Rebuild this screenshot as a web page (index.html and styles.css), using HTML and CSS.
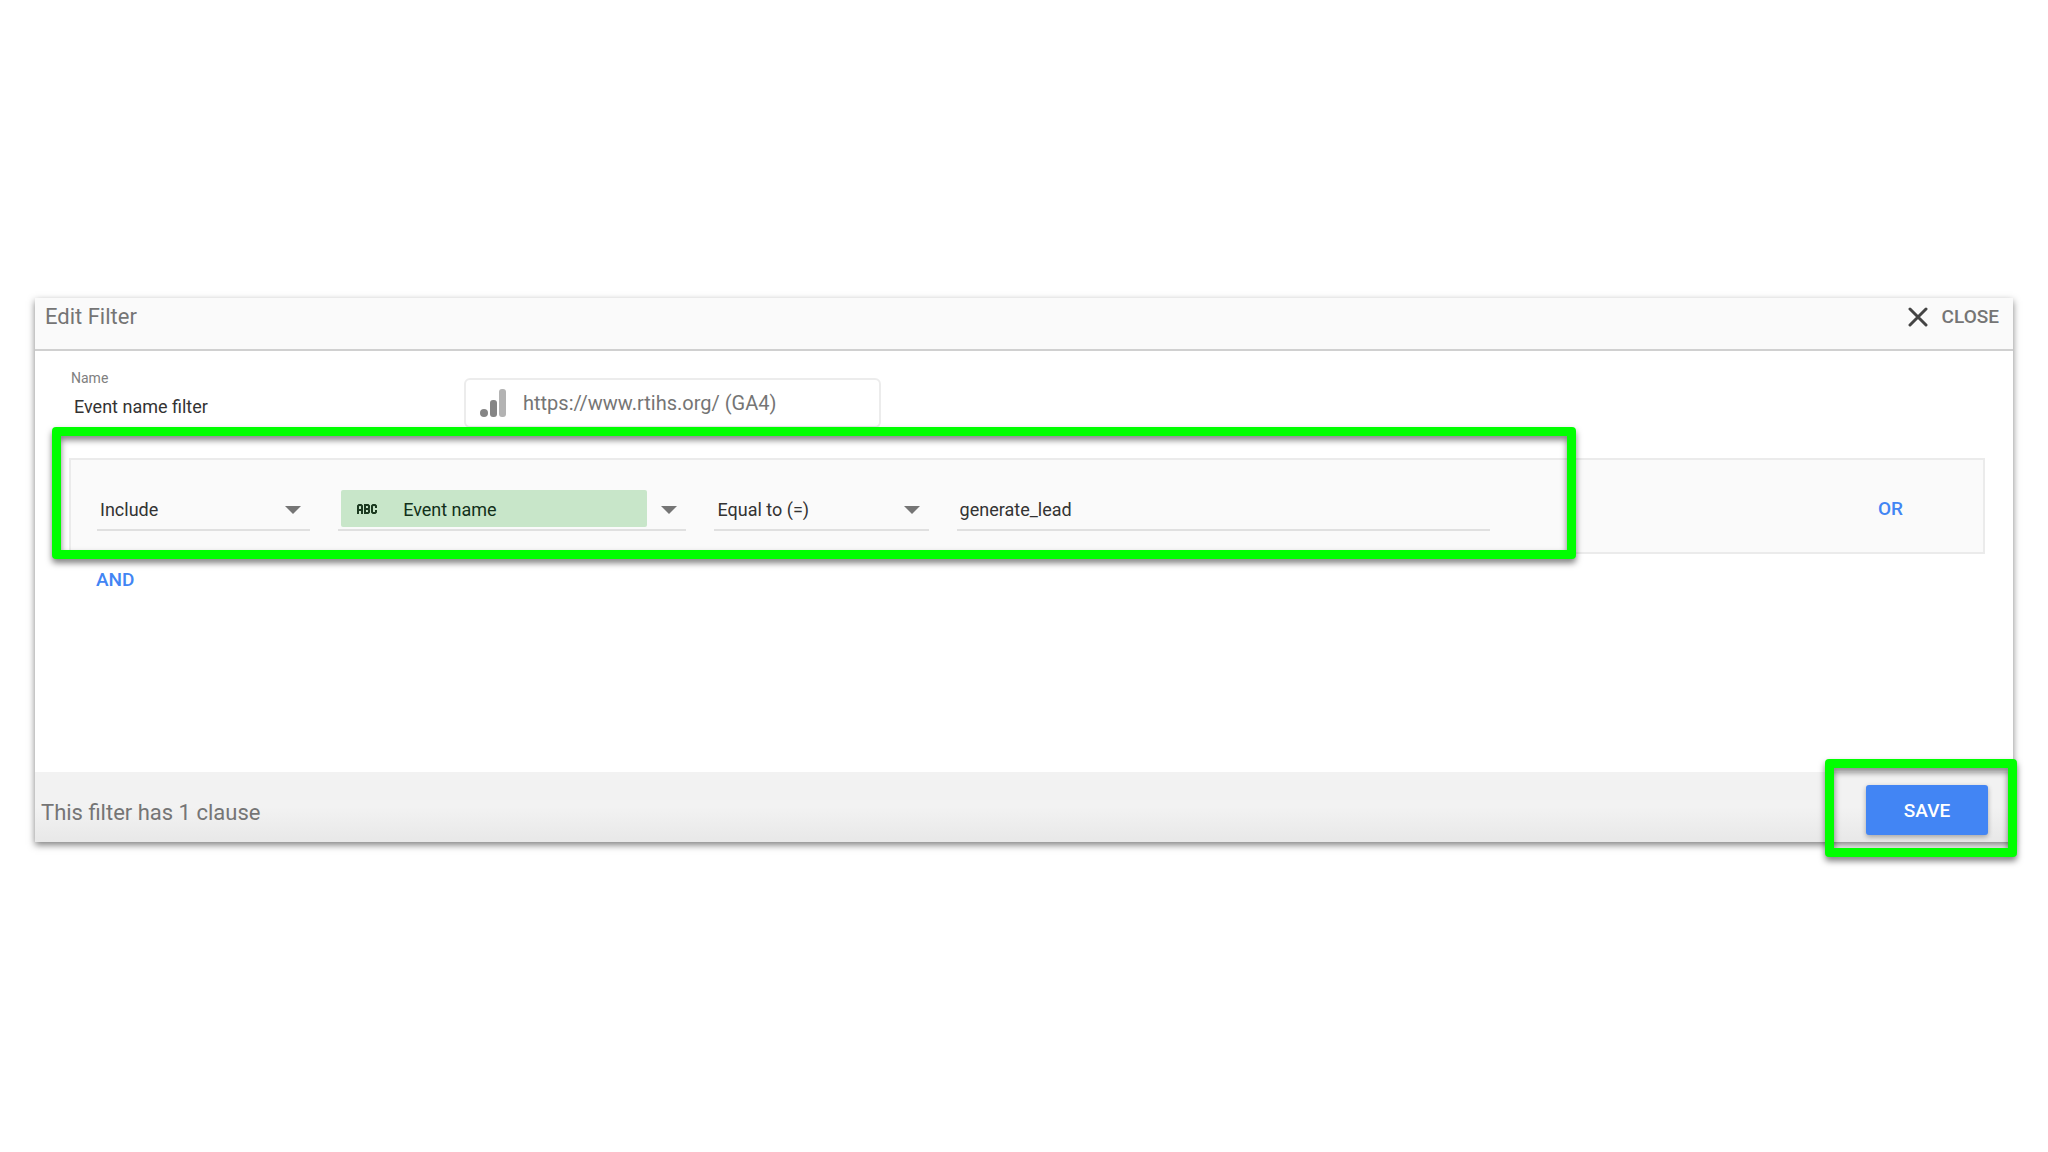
FILE: index.html
```html
<!DOCTYPE html>
<html lang="en">
<head>
    <meta charset="UTF-8">
    <meta name="viewport" content="width=device-width, initial-scale=1.0">
    <title>Edit Filter</title>
    <link rel="stylesheet" href="styles.css">
</head>
<body>

<main class="dialog">
    <!-- Header -->
    <header class="dialog-header">
        <h1>Edit Filter</h1>
        <button type="button" class="close-button">
            <svg width="20" height="20" viewBox="0 0 20 20" aria-hidden="true">
                <path d="M2 2L18 18M18 2L2 18" fill="none" stroke="#444" stroke-width="3" stroke-linecap="round"/>
            </svg>
            CLOSE
        </button>
    </header>

    <section class="dialog-body">
        <!-- Filter name and data source -->
        <div class="top-row">
            <div class="name-field">
                <label for="filter-name">Name</label>
                <input type="text" id="filter-name" value="Event name filter">
            </div>
            <div class="source">
                <svg width="28" height="30" viewBox="0 0 28 30" aria-hidden="true">
                    <circle cx="4" cy="25" r="4" fill="#858585"/>
                    <rect x="10" y="12" width="7" height="17" rx="3" fill="#858585"/>
                    <rect x="19" y="1" width="7" height="28" rx="3" fill="#b3b3b3"/>
                </svg>
                <span>https://www.rtihs.org/ (GA4)</span>
            </div>
        </div>

        <!-- Clause -->
        <div class="clause">
            <div class="clause-fields">
                <div class="field">
                    <select aria-label="Include or exclude">
                        <option>Include</option>
                        <option>Exclude</option>
                    </select>
                </div>
                <div class="field">
                    <button type="button" class="dimension">
                        <span class="chip">
                            <svg width="22" height="12" viewBox="0 0 22 12" aria-hidden="true">
                                <g fill="none" stroke="#1c3a20" stroke-width="2">
                                    <path d="M2 11V3L3 2H5L6 3V11M2 7H6"/>
                                    <path d="M9 2V10M8 2H12L13 3V5L12 6H9M12 6L13 7V9L12 10H8"/>
                                    <path d="M20 5V3L19 2H17L16 3V9L17 10H19L20 9V7"/>
                                </g>
                            </svg>
                            Event name
                        </span>
                    </button>
                </div>
                <div class="field">
                    <select aria-label="Condition">
                        <option>Equal to (=)</option>
                        <option>Contains</option>
                    </select>
                </div>
                <div class="field field-value">
                    <input type="text" aria-label="Value" value="generate_lead">
                </div>
                <div class="highlight highlight-clause"></div>
            </div>
            <div class="clause-or">
                <button type="button" class="text-button">OR</button>
            </div>
        </div>

        <button type="button" class="text-button and-button">AND</button>
    </section>

    <!-- Footer -->
    <footer class="dialog-footer">
        <p>This filter has 1 clause</p>
        <div class="save">
            <button type="button" class="save-button">SAVE</button>
            <div class="highlight highlight-save"></div>
        </div>
    </footer>
</main>

</body>
</html>
```

FILE: styles.css
```css
* {
    box-sizing: border-box;
}

body {
    min-height: 100vh;
    margin: 0;
    padding: 298px 35px 0;
    background-color: #fff;
    font-family: Roboto, 'Liberation Sans', sans-serif;
    font-size: 18px;
    color: #333;
}

button,
input,
select {
    margin: 0;
    padding: 0;
    border: none;
    background: none;
    color: inherit;
    font: inherit;
}

button {
    cursor: pointer;
}

/* Dialog */
.dialog {
    background-color: #fff;
    box-shadow: 0 3px 7px rgba(0, 0, 0, 0.5);
}

.dialog-header {
    display: flex;
    justify-content: space-between;
    align-items: flex-start;
    height: 53px;
    padding: 5px 14px 0 10px;
    background-color: #fafafa;
    border-bottom: 2px solid #d0d0d0;
}

.dialog-header h1 {
    margin: 0;
    font-size: 22px;
    font-weight: 400;
    line-height: 28px;
    color: #757575;
}

.close-button {
    display: flex;
    align-items: center;
    gap: 14px;
    font-size: 19px;
    font-weight: 500;
    line-height: 28px;
    color: #757575;
}

.dialog-body {
    height: 421px;
    padding: 19px 28px 0 34px;
}

/* Name and data source */
.top-row {
    display: flex;
    align-items: flex-start;
    height: 88px;
}

.name-field {
    display: flex;
    flex-direction: column;
    width: 395px;
    padding-left: 2px;
}

.name-field label {
    font-size: 14px;
    line-height: 16px;
    color: #808080;
}

.name-field input {
    width: 300px;
    height: 40px;
    padding-left: 3px;
}

.source {
    display: flex;
    align-items: center;
    gap: 15px;
    width: 417px;
    height: 50px;
    margin-top: 8px;
    padding-left: 14px;
    border: 2px solid #ececec;
    border-radius: 6px;
    font-size: 20px;
    color: #757575;
}

/* Clause */
.clause {
    display: grid;
    grid-template-columns: 1505fr 407fr;
    height: 96px;
    background-color: #fafafa;
    border: 2px solid #ebebeb;
}

.clause-fields {
    position: relative;
    display: grid;
    grid-template-columns: 213fr 348fr 214fr 533fr;
    align-items: start;
    gap: 28px;
    padding: 28px 86px 0 26px;
}

.field {
    position: relative;
    height: 43px;
    border-bottom: 2px solid #e0e0e0;
}

/* Drop-down arrow */
.field::after {
    content: "";
    position: absolute;
    top: 18px;
    right: 9px;
    border: 8px solid transparent;
    border-top-color: #757575;
    border-bottom-width: 0;
    pointer-events: none;
}

.field-value::after {
    display: none;
}

.field select,
.field input {
    width: 100%;
    height: 42px;
    padding-left: 3px;
    appearance: none;
}

.dimension {
    width: 100%;
    padding: 2px 39px 0 3px;
    color: #12301a;
}

.chip {
    display: flex;
    align-items: center;
    gap: 25px;
    height: 37px;
    padding: 1px 0 0 15px;
    background-color: #c8e6c9;
    border-radius: 2px;
}

.clause-or {
    display: flex;
    justify-content: flex-end;
    align-items: center;
    padding: 6px 80px 0 0;
}

.text-button {
    font-size: 19px;
    font-weight: 500;
    line-height: 24px;
    color: #4285f4;
}

.and-button {
    margin: 14px 0 0 27px;
}

/* Footer */
.dialog-footer {
    display: flex;
    justify-content: space-between;
    align-items: flex-start;
    height: 70px;
    padding: 13px 25px 0 6px;
    background: linear-gradient(#f2f2f2 50%, #e8e8e8);
}

.dialog-footer p {
    margin: 14px 0 0;
    font-size: 22px;
    line-height: 28px;
    color: #757575;
}

.save {
    position: relative;
}

.save-button {
    width: 122px;
    height: 50px;
    background-color: #4285f4;
    border-radius: 3px;
    box-shadow: 0 2px 5px rgba(0, 0, 0, 0.3);
    font-size: 19px;
    font-weight: 500;
    color: #fff;
}

/* Green frames over the dialog */
.highlight {
    position: absolute;
    border: 9px solid #00ff00;
    border-radius: 4px;
    filter: drop-shadow(0 4px 3px rgba(0, 0, 0, 0.5));
    pointer-events: none;
}

.highlight-clause {
    inset: -33px 0 -7px -19px;
}

.highlight-save {
    inset: -26px -29px -22px -41px;
}
```
